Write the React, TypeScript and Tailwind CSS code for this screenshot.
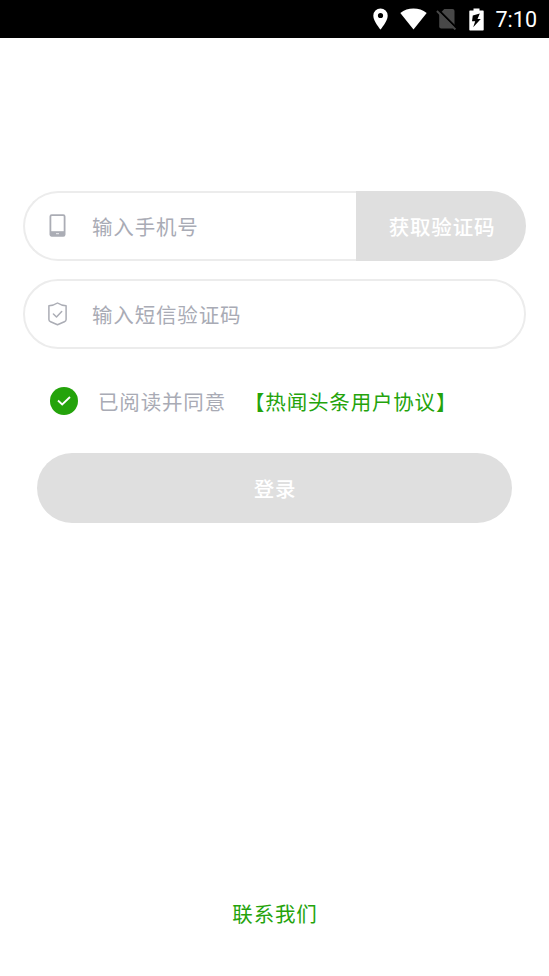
import React, { useState } from 'react';

const StatusBar = () => (
  <header className="flex h-[38px] w-full shrink-0 items-center justify-end bg-black pr-3 tracking-normal text-white">
    <svg className="mr-[12px] h-[22px] w-[15px]" viewBox="0 0 15 22" fill="currentColor">
      <path fillRule="evenodd" d="M7.5 0.5A7.2 7.2 0 0 0 .3 7.7C.3 13.1 7.5 21.5 7.5 21.5S14.7 13.1 14.7 7.7A7.2 7.2 0 0 0 7.5.5ZM7.5 4.9a2.6 2.6 0 1 1 0 5.2a2.6 2.6 0 0 1 0-5.2Z" />
    </svg>
    <svg className="mr-[9px] h-[22px] w-[27px]" viewBox="0 0 27 22" fill="currentColor">
      <path d="M13.5 21.5L.3 4.9C4.1 2 8.7.5 13.5.5S22.9 2 26.7 4.9Z" />
    </svg>
    <svg className="mr-[12px] h-[22px] w-[21px]" viewBox="0 0 21 22">
      <path d="M3.2 6.2L8.3 1H16.5Q18.5 1 18.5 3V18.5Q18.5 20.5 16.5 20.5H5.2Q3.2 20.5 3.2 18.5Z" fill="#484848" />
      <path d="M2.3 1.8L21 20.5" stroke="#000" strokeWidth="2" />
      <path d="M.9 3L19.4 21.5" stroke="#484848" strokeWidth="1.8" />
    </svg>
    <svg className="mr-[12px] h-[23px] w-[15px]" viewBox="0 0 15 23" fill="currentColor">
      <path fillRule="evenodd" d="M4.5 0.5H10.5V2.5H14Q14.7 2.5 14.7 3.2V21.8Q14.7 22.5 14 22.5H1Q.3 22.5 .3 21.8V3.2Q.3 2.5 1 2.5H4.5ZM10.8 5.5L3.8 7.5L3 13.3H6.2L4.2 19.3L11.8 11H8.5Z" />
    </svg>
    <span className="pt-[2px] font-['Roboto',sans-serif] text-[21.5px] leading-none">7:10</span>
  </header>
);

const PhoneIcon = () => (
  <svg className="relative -top-px h-[23px] w-[17px]" viewBox="0 0 17 23" fill="none">
    <rect x="1.4" y="1.2" width="14.2" height="20.6" rx="1.3" stroke="#abadb5" strokeWidth="1.8" />
    <path d="M1 17.2H16V22H1Z" fill="#abadb5" />
    <path d="M7 19.7H10" stroke="#fff" strokeWidth="0.8" />
  </svg>
);

const ShieldIcon = () => (
  <svg className="h-[24px] w-[19px]" viewBox="0 0 19 24" fill="none" stroke="#abadb5" strokeWidth="1.5" strokeLinejoin="round" strokeLinecap="round">
    <path d="M9.5 1C7 2.7 4.2 3.6 .9 3.8V17.4C.9 18.6 1.5 19.3 2.6 19.8L9.5 22.8L16.4 19.8C17.5 19.3 18.1 18.6 18.1 17.4V3.8C14.8 3.6 12 2.7 9.5 1Z" />
    <path d="M5.4 12L8.5 15L13.7 9.5" />
  </svg>
);

export default function App() {
  const [phone, setPhone] = useState('');
  const [code, setCode] = useState('');
  const [agreed, setAgreed] = useState(true);

  return (
    <div className="flex h-screen w-full flex-col overflow-hidden bg-white font-['Noto_Sans_CJK_SC',sans-serif] text-[20.5px] leading-8 tracking-[0.83px] text-[#a9abb5]">
      <StatusBar />

      <main className="flex flex-1 flex-col px-[23px] pt-[153px]">
        <div className="flex h-[70px]">
          <label className="flex min-w-0 flex-1 items-center rounded-l-full border-y-2 border-l-2 border-[#ececec] pl-[24px]">
            <PhoneIcon />
            <input
              className="ml-[26px] w-[220px] bg-transparent tracking-[0.83px] outline-none placeholder:text-[#a9abb5] placeholder:opacity-100"
              placeholder="输入手机号"
              value={phone}
              onChange={(e) => setPhone(e.target.value)}
            />
          </label>
          <button type="button" className="w-[170px] shrink-0 rounded-r-full bg-[#dfdfdf] pl-[2px] font-medium tracking-[0.83px] text-white">
            获取验证码
          </button>
        </div>

        <label className="mt-[18px] flex h-[70px] items-center rounded-full border-2 border-[#ececec] pl-[23px]">
          <ShieldIcon />
          <input
            className="ml-[25px] w-[300px] bg-transparent tracking-[0.83px] outline-none placeholder:text-[#a9abb5] placeholder:opacity-100"
            placeholder="输入短信验证码"
            value={code}
            onChange={(e) => setCode(e.target.value)}
          />
        </label>

        <div className="mt-[36px] flex h-8 items-center pl-[27px]">
          <button
            type="button"
            aria-label="同意"
            onClick={() => setAgreed(!agreed)}
            className={`flex h-7 w-7 items-center justify-center rounded-full ${agreed ? 'bg-[#24a30b]' : 'bg-[#dfdfdf]'}`}
          >
            <svg className="h-[10px] w-[14px]" viewBox="0 0 14 10" fill="none" stroke="#fff" strokeWidth="1.8">
              <path d="M1 4.5L5.2 8.5L13 1" />
            </svg>
          </button>
          <span className="ml-[20px]">已阅读并同意</span>
          <a className="ml-[18px] text-[#24a30b]">【热闻头条用户协议】</a>
        </div>

        <button type="button" className="mx-[14px] mt-[36px] h-[70px] rounded-full bg-[#dfdfdf] pl-px font-medium tracking-[0.83px] text-white">
          登录
        </button>

        <a className="mt-auto mb-[47px] pl-px text-center text-[#24a30b]">联系我们</a>
      </main>
    </div>
  );
}
